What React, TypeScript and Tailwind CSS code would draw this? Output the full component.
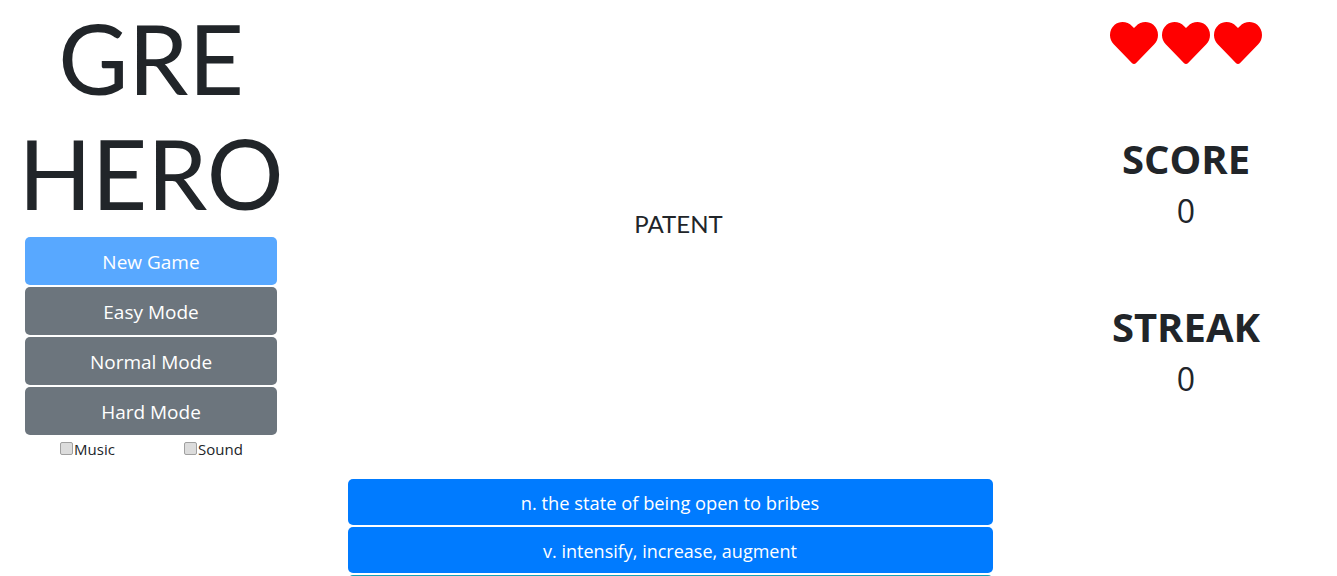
import React from "react";
import { FaHeart } from "react-icons/fa";

const ui = "font-['Open_Sans','Noto_Sans',sans-serif]";

function SideButton({ label, className }: { label: string; className: string }) {
  return (
    <button className={`h-[48px] w-full rounded-[5px] pt-[2px] text-[19px] text-white ${className}`}>
      {label}
    </button>
  );
}

function Toggle({ label }: { label: string }) {
  return (
    <label className="flex w-1/2 items-center justify-center text-[15px] leading-[24px] text-[#212529]">
      <input
        type="checkbox"
        className="mb-[2px] ml-[-1px] mr-[1px] h-[13px] w-[13px] appearance-none rounded-[2px] border border-[#a0a0a0] bg-[#dcdcdc]"
      />
      {label}
    </label>
  );
}

function Stat({ label, value }: { label: string; value: string }) {
  return (
    <div className="flex flex-col items-center text-[#212529]">
      <div className="text-[40px] font-bold leading-[48px]">{label}</div>
      <div className="mt-[4px] text-[32px] leading-[48px]">{value}</div>
    </div>
  );
}

export default function App() {
  return (
    <div className={`h-[576px] overflow-hidden bg-white ${ui}`}>
      <div className="grid grid-cols-[303px_1fr_302px]">
        <div className="flex flex-col items-center pl-[25px] pr-[26px]">
          <h1 className="whitespace-nowrap text-center font-['Lato',sans-serif] text-[96px] font-normal leading-[115px] text-[#212529]">
            GRE
            <br />
            HERO
          </h1>
          <div className="mt-[7px] flex w-full flex-col gap-[2px]">
            <SideButton label="New Game" className="bg-[#58a8ff]" />
            <SideButton label="Easy Mode" className="bg-[#6c757d]" />
            <SideButton label="Normal Mode" className="bg-[#6c757d]" />
            <SideButton label="Hard Mode" className="bg-[#6c757d]" />
          </div>
          <div className="mt-[2px] flex w-full">
            <Toggle label="Music" />
            <Toggle label="Sound" />
          </div>
        </div>

        <div className="flex flex-col items-center pl-[2px]">
          <div className="flex h-[479px] w-[645px] items-center justify-center">
            <div className="ml-[17px] mt-[-33px] font-['Lato',sans-serif] text-[24px] leading-[29px] text-[#212529]">
              PATENT
            </div>
          </div>
          <div className="flex w-[645px] flex-col gap-[2px]">
            <button className="h-[46px] w-full rounded-[5px] bg-[#007bff] pt-[1px] text-[18.3px] text-white">
              n. the state of being open to bribes
            </button>
            <button className="h-[46px] w-full rounded-[5px] bg-[#007bff] pt-[2px] text-[18px] text-white">
              v. intensify, increase, augment
            </button>
            <button className="h-[46px] w-full rounded-[5px] bg-[#17a2b8] text-[18px] text-white">
              &nbsp;
            </button>
          </div>
        </div>

        <div className="flex flex-col items-center">
          <div className="flex gap-[4px] pt-[19px] text-[#ff0000]">
            <FaHeart size={48} />
            <FaHeart size={48} />
            <FaHeart size={48} />
          </div>
          <div className="mt-[68px]">
            <Stat label="SCORE" value="0" />
          </div>
          <div className="mt-[68px]">
            <Stat label="STREAK" value="0" />
          </div>
        </div>
      </div>
    </div>
  );
}
